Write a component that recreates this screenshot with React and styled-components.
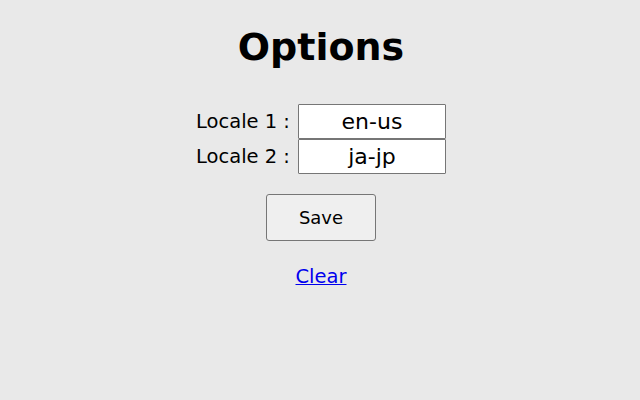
import React from "react";
import styled, { createGlobalStyle } from "styled-components";

const Global = createGlobalStyle`
  html, body { margin: 0; padding: 0; background: #e9e9e9; }
  body { font-family: "DejaVu Sans", "Noto Sans CJK JP", sans-serif; color: #000; }
`;

const Page = styled.div`
  width: 640px;
  height: 400px;
  display: flex;
  flex-direction: column;
  align-items: center;
`;

const Title = styled.h1`
  margin: 22px 0 0 2px;
  font-size: 38px;
  font-weight: 700;
  line-height: 50px;
`;

const Form = styled.div`
  margin: 32px 0 0 2px;
  display: grid;
  grid-template-columns: auto 148px;
  align-items: center;
  column-gap: 8px;
`;

const Label = styled.label`
  font-size: 19.5px;
  line-height: 35px;
  text-align: right;
`;

const Input = styled.input`
  box-sizing: border-box;
  width: 148px;
  height: 35px;
  border: 1px solid #767676;
  border-radius: 1px;
  background: #fff;
  font-family: inherit;
  font-size: 22px;
  text-align: center;
  padding: 0;
  margin: 0;
  color: #000;
`;

const SaveButton = styled.button`
  margin: 20px 0 0 2px;
  box-sizing: border-box;
  width: 110px;
  height: 47px;
  border: 1px solid #767676;
  border-radius: 3px;
  background: #efefef;
  font-family: inherit;
  font-size: 18px;
  color: #000;
`;

const ClearLink = styled.a`
  margin: 24px 0 0 2px;
  font-size: 19.5px;
  color: #0000ee;
  text-decoration: underline;
  cursor: pointer;
`;

export default function App() {
  return (
    <Page>
      <Global />
      <Title>Options</Title>
      <Form>
        <Label>Locale 1 :</Label>
        <Input defaultValue="en-us" />
        <Label>Locale 2 :</Label>
        <Input defaultValue="ja-jp" />
      </Form>
      <SaveButton>Save</SaveButton>
      <ClearLink href="#">Clear</ClearLink>
    </Page>
  );
}
